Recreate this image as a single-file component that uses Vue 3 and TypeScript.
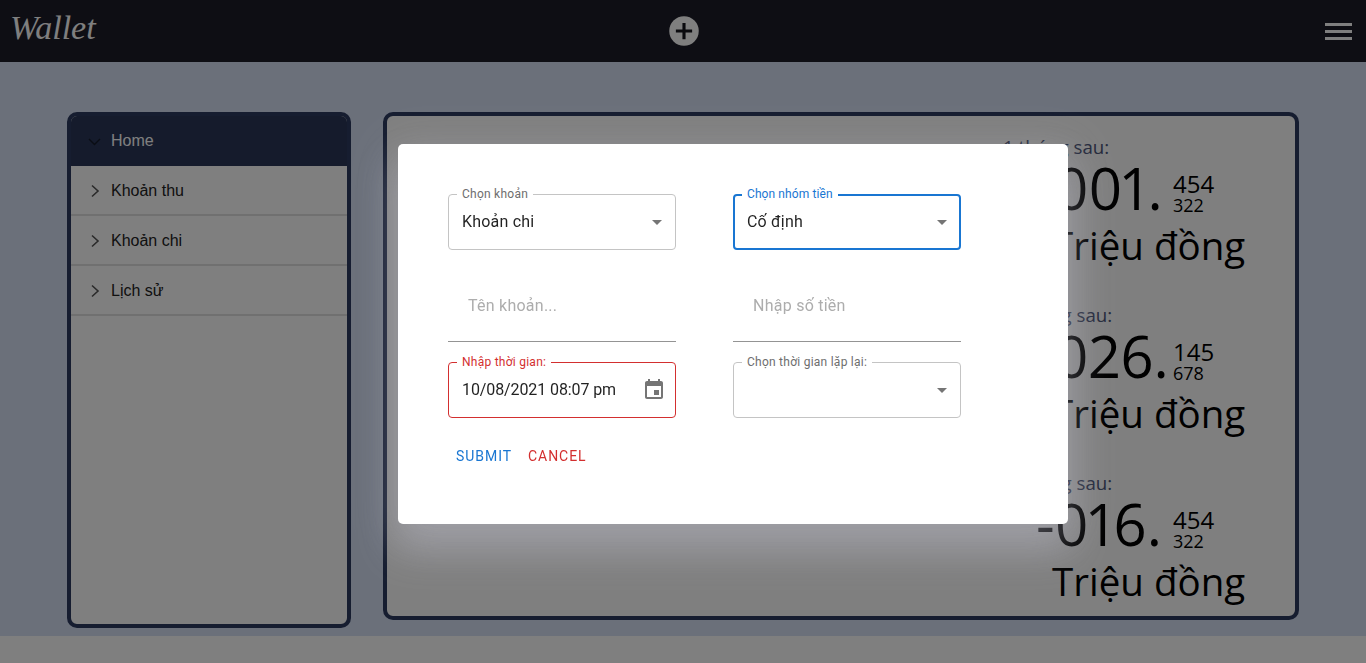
<template>
  <div class="page">
    <header class="topbar">
      <span class="logo">Wallet</span>
      <button class="add">
        <svg viewBox="0 0 24 24" width="30" height="30">
          <circle cx="12" cy="12" r="11.8" fill="#fff" />
          <path d="M12 5.5v13M5.5 12h13" stroke="#14141c" stroke-width="2.5" />
        </svg>
      </button>
      <div class="burger"><i></i><i></i><i></i></div>
    </header>

    <main class="content">
      <aside class="side">
        <div class="side-item home">
          <svg class="chev" viewBox="0 0 14 14" width="14" height="14">
            <path d="M2 5l5.5 5.5L13 5" fill="none" stroke="#141a28" stroke-width="1.4" />
          </svg>
          <span>Home</span>
        </div>
        <div v-for="item in menu" :key="item" class="side-item">
          <svg class="chev" viewBox="0 0 14 14" width="14" height="14">
            <path d="M5 1.5l6 5.5-6 5.5" fill="none" stroke="#555" stroke-width="1.6" />
          </svg>
          <span>{{ item }}</span>
        </div>
      </aside>

      <section class="panel">
        <div v-for="row in forecast" :key="row.label" class="stat">
          <div class="stat-label" :class="row.cls">{{ row.label }}</div>
          <div class="stat-value">
            <span class="big">{{ row.big }}</span>
            <span class="small">
              <b>{{ row.top }}</b>
              <em>{{ row.bottom }}</em>
            </span>
          </div>
          <div class="unit">Triệu đồng</div>
        </div>
      </section>
    </main>

    <div class="overlay">
      <div class="dialog">
        <div class="form">
          <div class="box">
            <label>Chọn khoản</label>
            <span class="val">Khoản chi</span>
            <i class="caret"></i>
          </div>
          <div class="box focus">
            <label>Chọn nhóm tiền</label>
            <span class="val">Cố định</span>
            <i class="caret"></i>
          </div>
          <div class="line"><span>Tên khoản...</span></div>
          <div class="line"><span>Nhập số tiền</span></div>
          <div class="box error">
            <label>Nhập thời gian:</label>
            <span class="val date">10/08/2021 08:07 pm</span>
            <svg class="cal" viewBox="0 0 24 24" width="24" height="24">
              <path
                fill="#757575"
                d="M17 12h-5v5h5v-5zM16 1v2H8V1H6v2H5c-1.11 0-1.99.9-1.99 2L3 19c0 1.1.89 2 2 2h14c1.1 0 2-.9 2-2V5c0-1.1-.9-2-2-2h-1V1h-2zm3 18H5V8h14v11z"
              />
            </svg>
          </div>
          <div class="box">
            <label>Chọn thời gian lặp lại:</label>
            <i class="caret"></i>
          </div>
        </div>
        <div class="actions">
          <button class="btn submit">SUBMIT</button>
          <button class="btn cancel">CANCEL</button>
        </div>
      </div>
    </div>
  </div>
</template>

<script setup lang="ts">
const menu = ["Khoản thu", "Khoản chi", "Lịch sử"];

const forecast = [
  { label: "1 tháng sau:", cls: "", big: "-001.", top: "454", bottom: "322" },
  { label: "3 tháng sau:", cls: "wide", big: "-026.", top: "145", bottom: "678" },
  { label: "6 tháng sau:", cls: "wide", big: "-016.", top: "454", bottom: "322" },
];
</script>

<style>
html,
body {
  background: #fff;
}
</style>

<style scoped>
.page {
  height: 663px;
  overflow: hidden;
  font-family: "Liberation Sans", Arial, sans-serif;
}

.topbar {
  height: 62px;
  background: #1c1c28;
  display: flex;
  align-items: center;
  padding: 0 14px 0 10px;
}

.logo {
  font-family: "Liberation Serif", serif;
  font-style: italic;
  font-size: 34px;
  color: #fff;
  margin-top: -6px;
  width: 90px;
}

.add {
  border: 0;
  padding: 0;
  background: none;
  display: flex;
  margin-left: 569px;
}

.burger {
  display: flex;
  flex-direction: column;
  gap: 4px;
  width: 27px;
  margin-left: auto;
}

.burger i {
  height: 3px;
  background: #fff;
}

.content {
  height: 524px;
  padding: 50px 67px 0;
  background: #d6e0f5;
  display: flex;
  gap: 32px;
  box-sizing: content-box;
}

.side {
  width: 284px;
  height: 516px;
  box-sizing: border-box;
  border: 4px solid #2c3a60;
  border-radius: 10px;
  background: #fff;
  overflow: hidden;
}

.side-item {
  height: 50px;
  box-sizing: border-box;
  padding: 2px 0 0 16px;
  display: flex;
  align-items: center;
  gap: 10px;
  font-size: 16px;
  color: #222;
  border-bottom: 2px solid #e0e0e0;
}

.side-item.home {
  background: #2a3759;
  color: #fff;
  border-bottom: 0;
  padding-top: 0;
}

.panel {
  width: 916px;
  height: 508px;
  box-sizing: border-box;
  border: 4px solid #2c3a60;
  border-radius: 10px;
  background: #fff;
  padding: 17px 0 0 616px;
}

.stat {
  height: 168px;
  font-family: "Open Sans", sans-serif;
  color: #000;
}

.stat-label {
  font-size: 18.7px;
  line-height: 28px;
  color: #4a5478;
}

.stat-label.wide {
  padding-left: 3px;
}

.stat-value {
  display: flex;
  align-items: flex-end;
  height: 53px;
  padding-left: 33px;
}

.big {
  width: 137px;
  font-size: 58px;
  font-weight: 500;
  line-height: 52px;
  font-variant-numeric: proportional-nums;
}

.small {
  display: flex;
  flex-direction: column;
}

.small b {
  font-weight: 500;
  font-size: 24px;
  line-height: 24px;
}

.small em {
  font-style: normal;
  font-weight: 400;
  font-size: 18px;
  line-height: 18px;
}

.unit {
  font-size: 38.5px;
  font-weight: 500;
  line-height: 52px;
  margin: 5px 0 0 49px;
  white-space: nowrap;
}

.overlay {
  position: fixed;
  inset: 0;
  background: rgba(0, 0, 0, 0.5);
}

.dialog {
  position: absolute;
  left: 398px;
  top: 144px;
  width: 670px;
  height: 380px;
  box-sizing: border-box;
  padding: 50px;
  background: #fff;
  border-radius: 5px;
  box-shadow:
    0 24px 38px 3px rgba(220, 220, 240, 0.25),
    0 9px 46px 8px rgba(220, 220, 240, 0.12);
  font-family: Roboto, sans-serif;
}

.form {
  display: grid;
  grid-template-columns: 228px 228px;
  grid-template-rows: 56px 72px 56px;
  column-gap: 57px;
  row-gap: 20px;
}

.box {
  position: relative;
  box-sizing: border-box;
  border: 1px solid #c4c4c4;
  border-radius: 4px;
  display: flex;
  align-items: center;
  padding: 0 0 2px 13px;
}

.box label {
  position: absolute;
  top: -8px;
  left: 8px;
  padding: 0 5px;
  background: #fff;
  font-size: 12px;
  line-height: 14px;
  letter-spacing: 0.25px;
  color: #6e6e6e;
}

.val {
  font-size: 16px;
  letter-spacing: 0.2px;
  color: rgba(0, 0, 0, 0.87);
}

.val.date {
  letter-spacing: -0.1px;
}

.caret {
  position: absolute;
  right: 13px;
  top: 25px;
  border-left: 5px solid transparent;
  border-right: 5px solid transparent;
  border-top: 5px solid #757575;
}

.box.focus {
  border: 2px solid #1976d2;
  padding-left: 12px;
}

.box.focus label {
  color: #1976d2;
  top: -9px;
  left: 7px;
  letter-spacing: 0.1px;
}

.box.focus .caret {
  right: 12px;
  top: 24px;
}

.box.error {
  border-color: #d32f2f;
}

.box.error label {
  color: #d32f2f;
}

.cal {
  position: absolute;
  right: 9px;
  top: 15px;
}

.line {
  border-bottom: 1px solid #949494;
  display: flex;
  align-items: center;
  padding: 0 0 1px 20px;
  font-size: 16px;
  letter-spacing: 0.25px;
  color: #adadad;
}

.actions {
  display: flex;
  margin-top: 20px;
}

.btn {
  height: 36px;
  padding: 0 8px;
  border: 0;
  background: none;
  font-family: Roboto, sans-serif;
  font-size: 14px;
  letter-spacing: 0.95px;
}

.submit {
  color: #1976d2;
}

.cancel {
  color: #d32f2f;
}
</style>
